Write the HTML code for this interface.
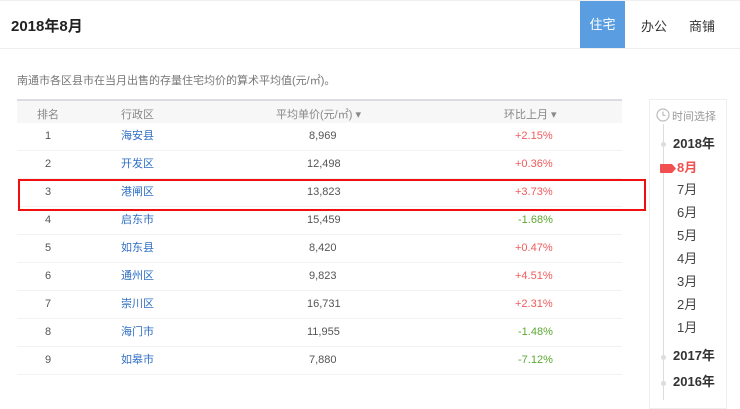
<!DOCTYPE html>
<html><head><meta charset="utf-8"><style>
*{margin:0;padding:0;box-sizing:border-box}
body{width:740px;height:400px;background:#fff;font-family:"Liberation Sans","Noto Sans CJK SC",sans-serif;position:relative;overflow:hidden;color:#555}
.a{position:absolute;white-space:nowrap}
.hdr{left:0;top:0;width:740px;height:49px;border-bottom:1px solid #eee;border-top:1px solid #f0f0f0}
.row{position:absolute;left:17px;width:605px;height:28px;border-bottom:1px solid #f2f2f2;font-size:11px}
.row span{position:absolute;top:0;height:27px;line-height:27px}
.r{color:#f05a5a}.g{color:#5ca832}.b{color:#2f6fc4}
.m{font-size:13px;color:#444;left:677px;line-height:18px}
</style></head><body>
<div class="a hdr"></div>
<div class="a" style="left:11px;top:15px;font-size:15px;font-weight:bold;color:#222">2018年8月</div>
<div class="a" style="left:580px;top:1px;width:45px;height:47px;background:#5a9ee1;color:#fff;font-size:13px;text-align:center;line-height:47px">住宅</div>
<div class="a" style="left:641px;top:16px;font-size:13px;color:#333">办公</div>
<div class="a" style="left:689px;top:16px;font-size:13px;color:#333">商铺</div>
<div class="a" style="left:17px;top:72px;font-size:11px;color:#777">南通市各区县市在当月出售的存量住宅均价的算术平均值(元/㎡)。</div>
<div class="a" style="left:17px;top:99px;width:605px;height:24px;background:#f7f7f7;border-top:2px solid #dcdde3;font-size:11px;color:#888">
<span class="a" style="left:20px;top:5px">排名</span>
<span class="a" style="left:104px;top:5px">行政区</span>
<span class="a" style="left:259px;top:5px">平均单价(元/㎡) ▾</span>
<span class="a" style="left:487px;top:5px">环比上月 ▾</span>
</div>
<div class="row" style="top:123px"><span style="left:28px">1</span><span class="b" style="left:104px">海安县</span><span style="left:292px">8,969</span><span class="r" style="left:498px">+2.15%</span></div>
<div class="row" style="top:151px"><span style="left:28px">2</span><span class="b" style="left:104px">开发区</span><span style="left:290px">12,498</span><span class="r" style="left:498px">+0.36%</span></div>
<div class="row" style="top:179px"><span style="left:28px">3</span><span class="b" style="left:104px">港闸区</span><span style="left:290px">13,823</span><span class="r" style="left:498px">+3.73%</span></div>
<div class="row" style="top:207px"><span style="left:28px">4</span><span class="b" style="left:104px">启东市</span><span style="left:290px">15,459</span><span class="g" style="left:501px">-1.68%</span></div>
<div class="row" style="top:235px"><span style="left:28px">5</span><span class="b" style="left:104px">如东县</span><span style="left:292px">8,420</span><span class="r" style="left:498px">+0.47%</span></div>
<div class="row" style="top:263px"><span style="left:28px">6</span><span class="b" style="left:104px">通州区</span><span style="left:292px">9,823</span><span class="r" style="left:498px">+4.51%</span></div>
<div class="row" style="top:291px"><span style="left:28px">7</span><span class="b" style="left:104px">崇川区</span><span style="left:290px">16,731</span><span class="r" style="left:498px">+2.31%</span></div>
<div class="row" style="top:319px"><span style="left:28px">8</span><span class="b" style="left:104px">海门市</span><span style="left:290px">11,955</span><span class="g" style="left:501px">-1.48%</span></div>
<div class="row" style="top:347px"><span style="left:28px">9</span><span class="b" style="left:104px">如皋市</span><span style="left:292px">7,880</span><span class="g" style="left:501px">-7.12%</span></div>
<div class="a" style="left:18px;top:179px;width:628px;height:32px;border:2px solid #f01010"></div>
<div class="a" style="left:649px;top:99px;width:78px;height:310px;border:1px solid #eee;background:#fff"></div>
<svg class="a" style="left:656px;top:108px" width="14" height="14" viewBox="0 0 14 14"><circle cx="7" cy="7" r="6" fill="none" stroke="#bbb" stroke-width="1.2"/><path d="M7 3.5V7.3H9.5" fill="none" stroke="#bbb" stroke-width="1.2"/></svg>
<div class="a" style="left:672px;top:108px;font-size:11px;color:#999">时间选择</div>
<div class="a" style="left:663px;top:124px;width:1px;height:276px;background:#ddd"></div>
<div class="a" style="left:661px;top:142px;width:5px;height:5px;border-radius:50%;background:#ddd"></div>
<div class="a" style="left:661px;top:355px;width:5px;height:5px;border-radius:50%;background:#ddd"></div>
<div class="a" style="left:661px;top:381px;width:5px;height:5px;border-radius:50%;background:#ddd"></div>
<div class="a m" style="left:673px;top:135px;font-weight:bold;color:#333">2018年</div>
<svg class="a" style="left:660px;top:164px" width="16" height="9"><path d="M0 1Q0 0 1 0H12L16 4.5L12 9H1Q0 9 0 8Z" fill="#f05050"/></svg>
<div class="a m" style="top:159px;color:#f05050;font-weight:bold">8月</div>
<div class="a m" style="top:181px">7月</div>
<div class="a m" style="top:204px">6月</div>
<div class="a m" style="top:227px">5月</div>
<div class="a m" style="top:250px">4月</div>
<div class="a m" style="top:273px">3月</div>
<div class="a m" style="top:296px">2月</div>
<div class="a m" style="top:319px">1月</div>
<div class="a m" style="left:673px;top:347px;font-weight:bold;color:#333">2017年</div>
<div class="a m" style="left:673px;top:373px;font-weight:bold;color:#333">2016年</div>
</body></html>
